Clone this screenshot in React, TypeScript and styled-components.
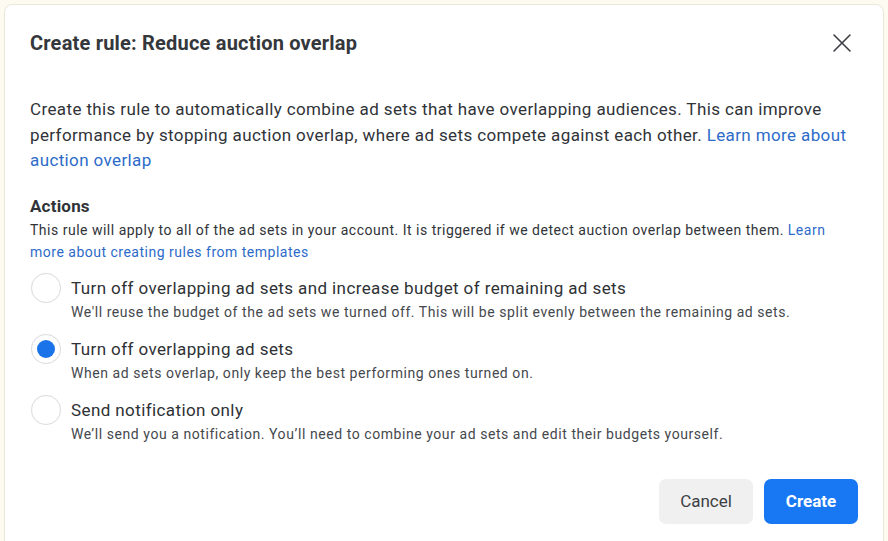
import React, { useState } from 'react';
import styled, { createGlobalStyle } from 'styled-components';

const GlobalStyle = createGlobalStyle`
  html, body {
    margin: 0;
    padding: 0;
    background: #fcfaf1;
    font-family: Roboto, "Liberation Sans", Arial, sans-serif;
    color: #303338;
  }
`;

const Page = styled.div`
  padding: 4px 4px 0 4px;
  height: 541px;
  box-sizing: border-box;
  overflow: hidden;
`;

const Card = styled.div`
  width: 880px;
  min-height: 560px;
  box-sizing: border-box;
  background: #ffffff;
  border: 1px solid #ebe7da;
  border-radius: 8px;
  padding: 26px 25px 0 25px;
`;

const Header = styled.div`
  display: flex;
  align-items: center;
  justify-content: space-between;
  height: 24px;
`;

const Title = styled.h1`
  margin: 0;
  font-size: 20px;
  font-weight: 700;
  line-height: 24px;
  letter-spacing: 0.2px;
  color: #34373b;
`;

const CloseButton = styled.button`
  display: flex;
  align-items: center;
  justify-content: center;
  width: 30px;
  height: 30px;
  margin-right: 1px;
  padding: 0;
  border: none;
  background: transparent;
  color: #3a3d42;
  cursor: pointer;
`;

const Intro = styled.p`
  margin: 42px 0 0 0;
  font-size: 17px;
  line-height: 25.5px;
  letter-spacing: 0.38px;
`;

const Link = styled.a`
  color: #2d6bc9;
  text-decoration: none;
`;

const SectionTitle = styled.h2`
  margin: 22px 0 0 0;
  font-size: 17px;
  font-weight: 700;
  line-height: 20px;
  letter-spacing: 0.2px;
`;

const Help = styled.p`
  margin: 3px 0 0 0;
  font-size: 14px;
  line-height: 22px;
  letter-spacing: 0.5px;
`;

const Options = styled.div`
  display: flex;
  flex-direction: column;
  gap: 14px;
  margin-top: 14px;
`;

const Option = styled.label`
  display: flex;
  align-items: flex-start;
  gap: 10px;
  cursor: pointer;
`;

const Radio = styled.span<{ $checked: boolean }>`
  flex: none;
  width: 30px;
  height: 30px;
  margin-top: -4px;
  margin-left: 1px;
  box-sizing: border-box;
  border-radius: 50%;
  border: 1px solid #dedede;
  box-shadow: 0 0 1px rgba(0, 0, 0, 0.08);
  background: #ffffff;
  display: flex;
  align-items: center;
  justify-content: center;

  &::after {
    content: '';
    width: 18px;
    height: 18px;
    border-radius: 50%;
    background: #1a73e8;
    display: ${(p) => (p.$checked ? 'block' : 'none')};
  }
`;

const OptionText = styled.div`
  display: flex;
  flex-direction: column;
`;

const OptionLabel = styled.span`
  font-size: 17px;
  line-height: 23px;
  letter-spacing: 0.4px;
  color: #2e3135;
`;

const OptionHint = styled.span`
  margin-top: 1px;
  font-size: 14px;
  line-height: 23px;
  letter-spacing: 0.56px;
  color: #45484d;
`;

const Footer = styled.div`
  display: flex;
  justify-content: flex-end;
  gap: 11px;
  margin-top: 33px;
`;

const Button = styled.button<{ $primary?: boolean }>`
  height: 45px;
  min-width: 94px;
  padding: 0 16px;
  border: none;
  border-radius: 7px;
  font-family: inherit;
  font-size: 17px;
  font-weight: ${(p) => (p.$primary ? 700 : 400)};
  background: ${(p) => (p.$primary ? '#1877f2' : '#f0f0f0')};
  color: ${(p) => (p.$primary ? '#ffffff' : '#3c3f44')};
  cursor: pointer;
`;

const options = [
  {
    label: 'Turn off overlapping ad sets and increase budget of remaining ad sets',
    hint: "We'll reuse the budget of the ad sets we turned off. This will be split evenly between the remaining ad sets.",
  },
  {
    label: 'Turn off overlapping ad sets',
    hint: 'When ad sets overlap, only keep the best performing ones turned on.',
  },
  {
    label: 'Send notification only',
    hint: 'We’ll send you a notification. You’ll need to combine your ad sets and edit their budgets yourself.',
  },
];

const App: React.FC = () => {
  const [selected, setSelected] = useState(1);

  return (
    <Page>
      <GlobalStyle />
      <Card>
        <Header>
          <Title>Create rule: Reduce auction overlap</Title>
          <CloseButton aria-label="Close">
            <svg width="20" height="20" viewBox="0 0 20 20" fill="none">
              <path d="M2 2L18 18M18 2L2 18" stroke="currentColor" strokeWidth="1.6" strokeLinecap="round" />
            </svg>
          </CloseButton>
        </Header>

        <Intro>
          Create this rule to automatically combine ad sets that have overlapping audiences. This can improve
          performance by stopping auction overlap, where ad sets compete against each other.{' '}
          <Link href="#">Learn more about auction overlap</Link>
        </Intro>

        <SectionTitle>Actions</SectionTitle>
        <Help>
          This rule will apply to all of the ad sets in your account. It is triggered if we detect auction overlap
          between them. <Link href="#">Learn more about creating rules from templates</Link>
        </Help>

        <Options>
          {options.map((o, i) => (
            <Option key={o.label} onClick={() => setSelected(i)}>
              <Radio $checked={selected === i} />
              <OptionText>
                <OptionLabel>{o.label}</OptionLabel>
                <OptionHint>{o.hint}</OptionHint>
              </OptionText>
            </Option>
          ))}
        </Options>

        <Footer>
          <Button>Cancel</Button>
          <Button $primary>Create</Button>
        </Footer>
      </Card>
    </Page>
  );
};

export default App;
